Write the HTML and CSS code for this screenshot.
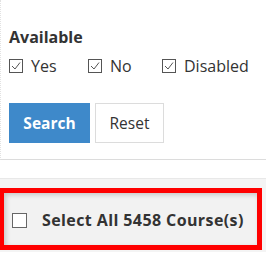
FILE: index.html
```html
<!DOCTYPE html>
<html>
<head>
<meta charset="utf-8">
<link rel="stylesheet" href="styles.css">
</head>
<body>
<div class="filters">
  <div class="group">
    <div class="group-title">Available</div>
    <div class="options">
      <label class="opt"><svg class="cb" viewBox="0 0 14 14"><rect x="0.5" y="0.5" width="13" height="13" fill="#fff" stroke="#555"/><path d="M3 7 L6 10 L11 3.5" fill="none" stroke="#555" stroke-width="1"/></svg>Yes</label>
      <label class="opt"><svg class="cb" viewBox="0 0 14 14"><rect x="0.5" y="0.5" width="13" height="13" fill="#fff" stroke="#555"/><path d="M3 7 L6 10 L11 3.5" fill="none" stroke="#555" stroke-width="1"/></svg>No</label>
      <label class="opt"><svg class="cb" viewBox="0 0 14 14"><rect x="0.5" y="0.5" width="13" height="13" fill="#fff" stroke="#555"/><path d="M3 7 L6 10 L11 3.5" fill="none" stroke="#555" stroke-width="1"/></svg>Disabled</label>
    </div>
  </div>
  <div class="actions">
    <button class="btn btn-primary">Search</button>
    <button class="btn btn-default">Reset</button>
  </div>
</div>
<div class="results">
  <div class="select-all">
    <span class="box"></span>
    <span class="select-text">Select All 5458 Course(s)</span>
  </div>
</div>
</body>
</html>
```
FILE: styles.css
```css
html, body {
  margin: 0;
  padding: 0;
  background: #fff;
  font-family: "Open Sans", "Noto Sans", sans-serif;
  color: #333;
}
.filters {
  height: 160px;
  box-sizing: border-box;
  padding: 27px 0 0 8px;
  border-left: 1px dotted #e2e2e2;
  border-bottom: 1px solid #dcdcdc;
}
.group-title {
  font-weight: 700;
  font-size: 16px;
  line-height: 20px;
  color: #333;
}
.options {
  display: flex;
  margin-top: 9px;
}
.opt {
  display: flex;
  align-items: center;
  font-size: 16px;
  line-height: 20px;
  color: #333;
}
.opt:nth-child(1) { width: 79px; }
.opt:nth-child(2) { width: 74px; }
.cb {
  width: 14px;
  height: 14px;
  margin-right: 8px;
}
.actions {
  display: flex;
  gap: 5px;
  margin-top: 27px;
}
.btn {
  height: 40px;
  font-family: "Open Sans", "Noto Sans", sans-serif;
  font-size: 15.5px;
  padding: 0;
  border-radius: 0;
}
.btn-primary {
  width: 81px;
  background: #3e89ca;
  border: 1px solid #3e89ca;
  color: #fff;
  font-weight: 700;
}
.btn-default {
  width: 69px;
  background: #fff;
  border: 1px solid #dcdcdc;
  color: #333;
}
.results {
  margin-top: 18px;
  border-top: 1px solid #e8e8e8;
  background: #f4f4f4;
  padding-top: 9px;
  height: 74px;
  box-sizing: border-box;
}
.select-all {
  width: 262px;
  height: 62px;
  box-sizing: border-box;
  border: 5px solid #ff0000;
  border-left-width: 4px;
  background: #f2f2f2;
  box-shadow: inset 2px 2px 5px rgba(0,0,0,0.18);
  display: flex;
  align-items: center;
  padding-left: 8px;
  padding-top: 2px;
}
.box {
  width: 15px;
  height: 15px;
  box-sizing: border-box;
  border: 1px solid #666;
  background: #fff;
  margin-right: 15px;
}
.select-text {
  font-weight: 700;
  font-size: 16px;
  letter-spacing: 0.4px;
  color: #333;
}
```
